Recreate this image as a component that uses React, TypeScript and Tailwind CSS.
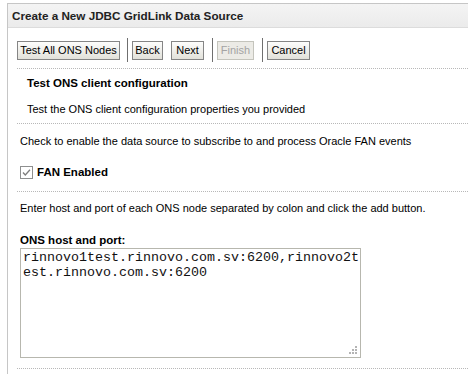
import React from "react";

const font = { fontFamily: '"Liberation Sans", Arial, sans-serif' };

const Btn = ({ label, w, disabled }: { label: string; w: string; disabled?: boolean }) => (
	<button
		disabled={disabled}
		className={
			(disabled
				? "border-[#c4c4bc] bg-[#ecebe6] text-[#a3a3a3] "
				: "border-[#858585] bg-gradient-to-b from-[#fdfdfc] to-[#e2e1da] text-black ") +
			w +
			" h-[19px] text-[11px] leading-none border flex items-center justify-center whitespace-nowrap"
		}>
		{label}
	</button>
);

const Sep = () => <div className="w-px h-[24px] bg-[#6f6f6f] ml-[7px] mr-[4px]" />;

const Dots = () => <div className="border-t border-dotted border-[#b8b8b8]" />;

export default function App() {
	return (
		<div className="w-[468px] h-[375px] bg-white pt-[3px] pl-[7px] text-black" style={font}>
			<div className="h-[371px] border-l border-t border-[#c6c6c6]">
				{/* title bar */}
				<div className="h-[24px] flex items-center pl-[4px] border-b border-[#dcdcdc] bg-gradient-to-b from-[#f4f4f4] to-[#ebebeb]">
					<span className="text-[11.7px] font-bold text-[#222]">
						Create a New JDBC GridLink Data Source
					</span>
				</div>

				<div className="pl-[9px]">
					{/* buttons */}
					<div className="mt-[10px] h-[24px] flex items-center">
						<Btn label="Test All ONS Nodes" w="w-[103px]" />
						<Sep />
						<Btn label="Back" w="w-[31px]" />
						<div className="w-[8px]" />
						<Btn label="Next" w="w-[33px]" />
						<div className="ml-px">
							<Sep />
						</div>
						<Btn label="Finish" w="w-[37px]" disabled />
						<div className="ml-px">
							<Sep />
						</div>
						<Btn label="Cancel" w="w-[43px]" />
					</div>

					<div className="mt-[6px]">
						<Dots />
					</div>

					{/* test section */}
					<div className="pl-[10px] text-[11px] leading-[14px]">
						<div className="mt-[7px] text-[11.5px] font-bold">Test ONS client configuration</div>
						<div className="mt-[12px]">Test the ONS client configuration properties you provided</div>
					</div>
					<div className="mt-[7px]">
						<Dots />
					</div>

					{/* FAN section */}
					<div className="pl-[3px] text-[11px] leading-[14px]">
						<div className="mt-[10px]">
							Check to enable the data source to subscribe to and process Oracle FAN events
						</div>
						<div className="mt-[16px] h-[16px] flex items-center gap-[4px]">
							<svg width="13" height="13" viewBox="0 0 13 13">
								<rect x="0.5" y="0.5" width="12" height="12" fill="#fff" stroke="#8e8f8f" />
								<path d="M3 6.5 L5.3 9 L10 3.8" fill="none" stroke="#7d7d7d" strokeWidth="1.3" />
							</svg>
							<span className="text-[11.5px] font-bold">FAN Enabled</span>
						</div>
					</div>
					<div className="mt-[11px]">
						<Dots />
					</div>

					<div className="pl-[3px] text-[11px] leading-[14px]">
						<div className="mt-[9px]">
							Enter host and port of each ONS node separated by colon and click the add button.
						</div>
						<div className="mt-[18px] text-[11.5px] font-bold">ONS host and port:</div>
						<div className="relative mt-px w-[341px] h-[110px] border border-[#b7b7ae] bg-white pl-[2px] pt-px">
							<div
								className="text-[13.33px] leading-[15px] break-all text-[#111]"
								style={{ fontFamily: '"Liberation Mono", "Courier New", monospace' }}>
								rinnovo1test.rinnovo.com.sv:6200,rinnovo2test.rinnovo.com.sv:6200
							</div>
							<svg
								className="absolute right-[3px] bottom-[3px]"
								width="8"
								height="8"
								viewBox="0 0 8 8"
								fill="#b4b4b4">
								<rect x="6" y="0" width="2" height="2" />
								<rect x="3" y="3" width="2" height="2" />
								<rect x="6" y="3" width="2" height="2" />
								<rect x="0" y="6" width="2" height="2" />
								<rect x="3" y="6" width="2" height="2" />
								<rect x="6" y="6" width="2" height="2" />
							</svg>
						</div>
					</div>
					<div className="mt-[10px]">
						<Dots />
					</div>
				</div>
			</div>
		</div>
	);
}
